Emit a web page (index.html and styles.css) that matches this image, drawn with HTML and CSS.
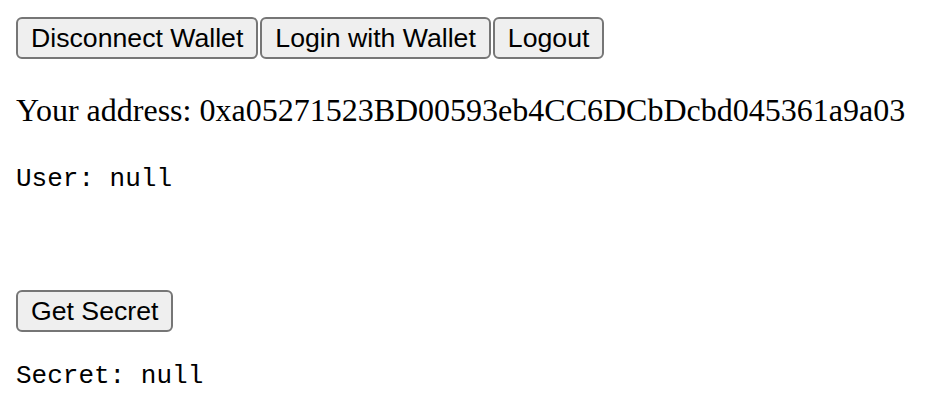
FILE: index.html
```html
<!DOCTYPE html>
<html>
<head>
<meta charset="utf-8">
<link rel="stylesheet" href="styles.css">
</head>
<body>
<div class="app">
  <div class="actions"><button class="btn">Disconnect Wallet</button><button class="btn">Login with Wallet</button><button class="btn">Logout</button></div>
  <p class="address">Your address: 0xa05271523BD00593eb4CC6DCbDcbd045361a9a03</p>
  <pre class="mono user">User: null</pre>
  <div class="spacer"></div>
  <div class="actions"><button class="btn">Get Secret</button></div>
  <pre class="mono secret">Secret: null</pre>
</div>
</body>
</html>
```
FILE: styles.css
```css
html, body {
  margin: 0;
  padding: 0;
  background: #ffffff;
}
body {
  padding: 16px;
  font-family: "Liberation Serif", "Times New Roman", serif;
  font-size: 32px;
  color: #000;
}
.actions {
  display: flex;
  align-items: flex-start;
  gap: 2px;
  padding-top: 1px;
}
.btn {
  font-family: "Liberation Sans", Arial, sans-serif;
  font-size: 26.67px;
  line-height: 32px;
  padding: 3px 13px;
  margin: 0;
  border: 2px solid #767676;
  border-radius: 6px;
  background: #efefef;
  color: #000;
}
.address {
  margin: 33px 0 32px;
  line-height: 37px;
}
.mono {
  font-family: "Liberation Mono", "Courier New", monospace;
  font-size: 26px;
  line-height: 30px;
  margin: 26px 0;
}
.user {
  margin-top: 35px;
}
.secret {
  margin-top: 29px;
}
.spacer {
  height: 69px;
}
```
